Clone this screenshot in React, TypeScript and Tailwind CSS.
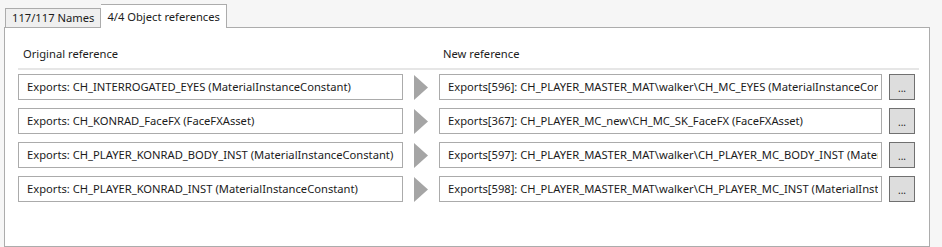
import React from "react";

const rows = [
  {
    from: "Exports: CH_INTERROGATED_EYES (MaterialInstanceConstant)",
    to: "Exports[596]: CH_PLAYER_MASTER_MAT\\walker\\CH_MC_EYES (MaterialInstanceConstant)",
  },
  {
    from: "Exports: CH_KONRAD_FaceFX (FaceFXAsset)",
    to: "Exports[367]: CH_PLAYER_MC_new\\CH_MC_SK_FaceFX (FaceFXAsset)",
  },
  {
    from: "Exports: CH_PLAYER_KONRAD_BODY_INST (MaterialInstanceConstant)",
    to: "Exports[597]: CH_PLAYER_MASTER_MAT\\walker\\CH_PLAYER_MC_BODY_INST (MaterialInstanceConstant)",
  },
  {
    from: "Exports: CH_PLAYER_KONRAD_INST (MaterialInstanceConstant)",
    to: "Exports[598]: CH_PLAYER_MASTER_MAT\\walker\\CH_PLAYER_MC_INST (MaterialInstanceConstant)",
  },
];

function Arrow() {
  return (
    <svg width="14" height="25" viewBox="0 0 14 25" className="block">
      <polygon points="0,0 14,12.5 0,25" fill="#a5a5a5" />
    </svg>
  );
}

export default function App() {
  return (
    <div className="w-[942px] h-[247px] bg-[#f6f6f6] overflow-hidden text-[11.2px] text-[#1b1b1b] font-['Noto_Sans',sans-serif]">
      {/* tabs */}
      <div className="flex items-end h-[27px] pl-[5px] pt-[4px]">
        <div className="h-[19px] px-[6px] flex items-center bg-[#efefef] border border-b-0 border-[#acacac] leading-none">
          117/117 Names
        </div>
        <div className="relative z-10 -mb-px h-[24px] px-[6px] flex items-center bg-white border border-b-0 border-l-0 border-[#acacac] leading-none">
          4/4 Object references
        </div>
      </div>

      {/* panel */}
      <div className="ml-[4px] w-[926px] h-[220px] bg-white border border-[#acacac] px-[13px]">
        <div className="flex mt-[17px] h-[18px] items-center">
          <div className="w-[421px] pl-[5px]">Original reference</div>
          <div className="pl-[4px]">New reference</div>
        </div>
        <div className="mt-[5px] w-[901px] border-b-2 border-[#e6e6e6]" />
        <div className="mt-[4px] flex flex-col gap-[8px]">
          {rows.map((r, i) => (
            <div key={i} className="flex items-center h-[26px]">
              <div className="w-[385px] h-[26px] border border-[#ababab] flex items-center pl-[8px] pr-[2px]">
                <div className="w-full overflow-hidden whitespace-nowrap">{r.from}</div>
              </div>
              <div className="w-[36px] flex justify-center">
                <Arrow />
              </div>
              <div className="w-[443px] h-[26px] border border-[#ababab] flex items-center pl-[8px] pr-[3px]">
                <div className="w-full overflow-hidden whitespace-nowrap">{r.to}</div>
              </div>
              <button className="ml-[7px] w-[26px] h-[26px] bg-[#dddddd] border border-[#707070] flex items-end justify-center pb-[6px] text-[10px] leading-none">
                ...
              </button>
            </div>
          ))}
        </div>
      </div>
    </div>
  );
}
